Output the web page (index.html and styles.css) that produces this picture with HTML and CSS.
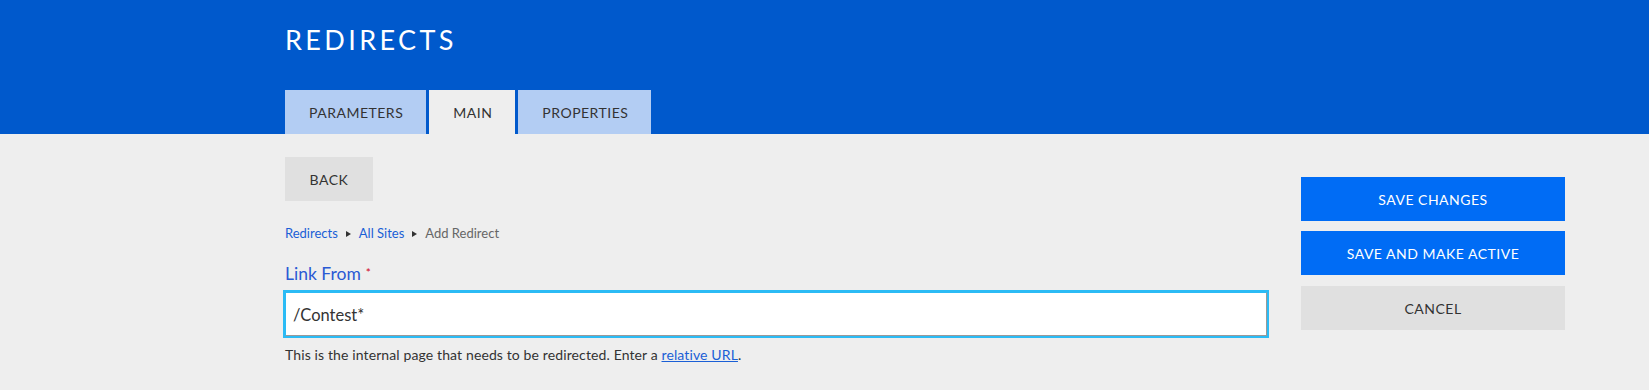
FILE: index.html
```html
<!DOCTYPE html>
<html lang="en">
<head>
<meta charset="utf-8">
<title>Redirects</title>
<link rel="stylesheet" href="styles.css">
</head>
<body>
<header class="header">
  <div class="wrap">
    <h1 class="title">REDIRECTS</h1>
    <nav class="tabs">
      <a class="tab" href="#">PARAMETERS</a>
      <a class="tab tab-active" href="#">MAIN</a>
      <a class="tab" href="#">PROPERTIES</a>
    </nav>
  </div>
</header>
<main class="wrap body">
  <section class="main-col">
    <button class="btn btn-gray btn-back" type="button">BACK</button>
    <div class="crumbs">
      <a href="#">Redirects</a>
      <svg class="sep" width="5" height="6" viewBox="0 0 5 6"><path d="M0 0 L5 3 L0 6 Z" fill="#333"/></svg>
      <a href="#">All Sites</a>
      <svg class="sep" width="5" height="6" viewBox="0 0 5 6"><path d="M0 0 L5 3 L0 6 Z" fill="#333"/></svg>
      <span class="current">Add Redirect</span>
    </div>
    <label class="label" for="linkfrom">Link From<span class="req">*</span></label>
    <input class="input" id="linkfrom" type="text" value="/Contest*">
    <p class="help">This is the internal page that needs to be redirected. Enter a <a href="#">relative URL</a>.</p>
  </section>
  <aside class="side-col">
    <button class="btn btn-blue" type="button">SAVE CHANGES</button>
    <button class="btn btn-blue" type="button">SAVE AND MAKE ACTIVE</button>
    <button class="btn btn-gray btn-cancel" type="button">CANCEL</button>
  </aside>
</main>
</body>
</html>
```

FILE: styles.css
```css
html, body {
  margin: 0;
  padding: 0;
}
body {
  background: #eeeeee;
  font-family: Lato, "Open Sans", sans-serif;
  color: #333;
  width: 1649px;
  height: 390px;
  overflow: hidden;
}
.wrap {
  padding-left: 285px;
}
.header {
  background: #0059cc;
  height: 134px;
  box-sizing: border-box;
  padding-top: 25px;
}
.title {
  margin: 0;
  font-size: 27px;
  line-height: 30px;
  font-weight: 400;
  letter-spacing: 3.4px;
  color: #fff;
}
.tabs {
  display: flex;
  gap: 3px;
  margin-top: 35px;
}
.tab {
  display: flex;
  align-items: center;
  height: 44px;
  padding: 0 23px 0 24px;
  background: #b3cdf3;
  color: #333;
  font-size: 14px;
  letter-spacing: 0.5px;
  text-decoration: none;
}
.tab-active {
  background: #eeeeee;
}
.body {
  display: flex;
  gap: 34px;
}
.main-col {
  width: 982px;
  display: flex;
  flex-direction: column;
  align-items: flex-start;
}
.btn {
  height: 44px;
  border: 0;
  font-family: Lato, "Open Sans", sans-serif;
  font-size: 14px;
  letter-spacing: 0.5px;
  cursor: pointer;
  padding: 0;
}
.btn-gray {
  background: #e0e0e0;
  color: #333;
}
.btn-blue {
  background: #006cf5;
  color: #fff;
}
.btn-back {
  margin-top: 23px;
  width: 88px;
}
.crumbs {
  margin-top: 22px;
  font-size: 13px;
  line-height: 20px;
  display: flex;
  align-items: center;
}
.crumbs a {
  color: #1a5fd6;
  text-decoration: none;
}
.crumbs .sep {
  margin: 1px 8px 0 8px;
}
.crumbs .current {
  color: #666;
}
.label {
  margin-top: 18px;
  font-size: 17.5px;
  line-height: 24px;
  color: #2a5ad4;
}
.req {
  color: #d0021b;
  font-size: 12px;
  vertical-align: 3px;
  margin-left: 5px;
}
.input {
  margin-top: 6px;
  width: 982px;
  height: 44px;
  box-sizing: border-box;
  border: 1px solid #2bbbf5;
  border-right-color: #999;
  border-bottom-color: #999;
  outline: 2px solid #2bbbf5;
  background: #fff;
  font-family: Lato, "Open Sans", sans-serif;
  font-size: 16.5px;
  color: #333;
  padding: 1px 7px 0;
}
.help {
  margin: 9px 0 0;
  font-size: 14px;
  line-height: 20px;
  letter-spacing: 0.12px;
  color: #333;
}
.help a {
  color: #1a5fd6;
}
.side-col {
  width: 264px;
  margin-top: 43px;
  display: flex;
  flex-direction: column;
  gap: 10px;
}
.btn-cancel {
  margin-top: 1px;
}
```
